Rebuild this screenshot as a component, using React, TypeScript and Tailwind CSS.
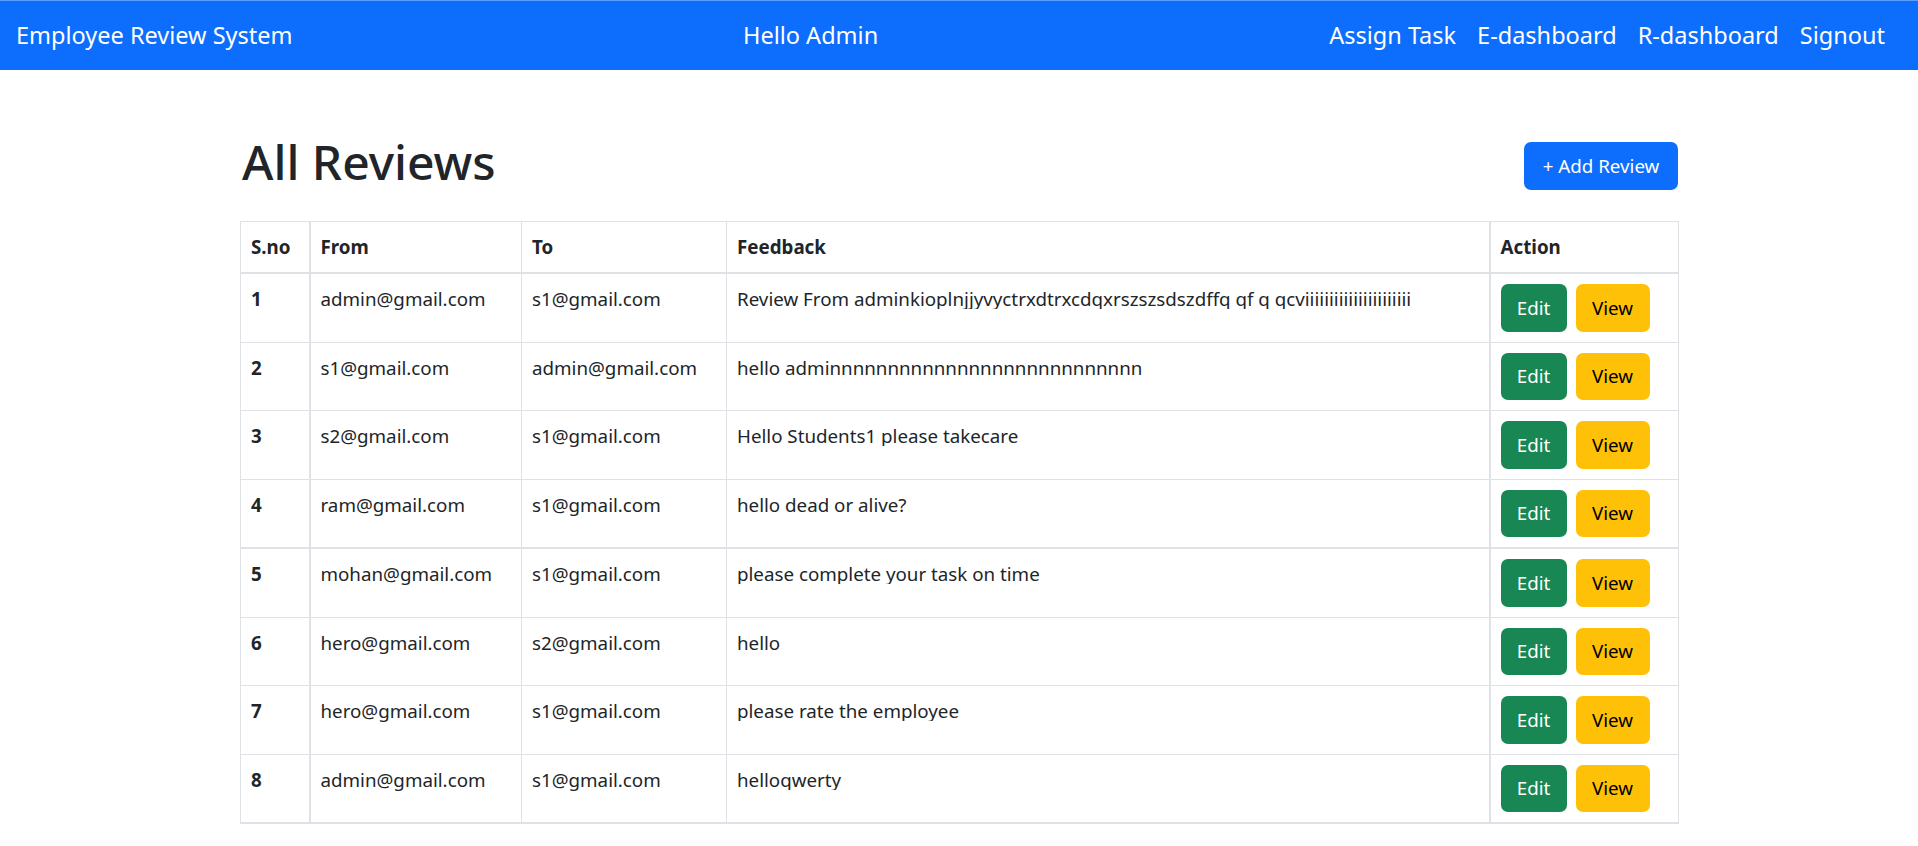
const reviews = [
  { from: 'admin@gmail.com', to: 's1@gmail.com', feedback: 'Review From adminkioplnjjyvyctrxdtrxcdqxrszszsdszdffq qf q qcviiiiiiiiiiiiiiiiiiiiii' },
  { from: 's1@gmail.com', to: 'admin@gmail.com', feedback: 'hello admi' + 'n'.repeat(27) },
  { from: 's2@gmail.com', to: 's1@gmail.com', feedback: 'Hello Students1 please takecare' },
  { from: 'ram@gmail.com', to: 's1@gmail.com', feedback: 'hello dead or alive?' },
  { from: 'mohan@gmail.com', to: 's1@gmail.com', feedback: 'please complete your task on time' },
  { from: 'hero@gmail.com', to: 's2@gmail.com', feedback: 'hello' },
  { from: 'hero@gmail.com', to: 's1@gmail.com', feedback: 'please rate the employee' },
  { from: 'admin@gmail.com', to: 's1@gmail.com', feedback: 'helloqwerty' },
];

function Navbar() {
  return (
    <nav className="h-[70px] bg-[#0d6efd] border-t border-[#5c9dfd] flex items-center px-4 text-white text-[23.5px]">
      <div className="w-[727px]">Employee Review System</div>
      <div>Hello Admin</div>
      <div className="ml-auto flex gap-[21px] pr-[17px]">
        <a>Assign Task</a>
        <a>E-dashboard</a>
        <a>R-dashboard</a>
        <a>Signout</a>
      </div>
    </nav>
  );
}

export default function App() {
  return (
    <div className="min-h-screen bg-white font-['Noto_Sans',sans-serif] text-[#212529]">
      <Navbar />
      <main className="w-[1438px] mx-auto">
        <div className="flex items-start justify-between pt-[62px] pb-[29px]">
          <h1 className="pl-[2px] text-[48px] leading-[60px] font-medium">All Reviews</h1>
          <button className="mt-[10px] h-[48px] w-[154px] rounded-[7px] bg-[#0d6efd] text-white text-[18.75px]">
            + Add Review
          </button>
        </div>
        <table className="w-full table-fixed border-collapse text-[18.75px] leading-[30px]">
          <colgroup>
            <col className="w-[69px]" />
            <col className="w-[212px]" />
            <col className="w-[205px]" />
            <col className="w-[763px]" />
            <col className="w-[189px]" />
          </colgroup>
          <thead>
            <tr className="border-t border-b-2 border-[#dee2e6] font-bold text-left">
              <th className="py-[10px] px-[10px] border-l border-r-2 border-[#dee2e6]">S.no</th>
              <th className="py-[10px] px-[10px] border-r border-[#dee2e6]">From</th>
              <th className="py-[10px] px-[10px] border-r border-[#dee2e6]">To</th>
              <th className="py-[10px] px-[10px] border-r-2 border-[#dee2e6]">Feedback</th>
              <th className="py-[10px] px-[10px] border-r border-[#dee2e6]">Action</th>
            </tr>
          </thead>
          <tbody>
            {reviews.map((r, i) => (
              <tr
                key={i}
                className={
                  i === 3 || i === 7
                    ? 'border-b-2 border-[#dee2e6] align-top'
                    : 'border-b border-[#dee2e6] align-top'
                }
              >
                <td className="py-[10px] px-[10px] font-bold border-l border-r-2 border-[#dee2e6]">{i + 1}</td>
                <td className="py-[10px] px-[10px] border-r border-[#dee2e6]">{r.from}</td>
                <td className="py-[10px] px-[10px] border-r border-[#dee2e6]">{r.to}</td>
                <td className="py-[10px] px-[10px] border-r-2 border-[#dee2e6]">
                  <div className="h-[25px] overflow-hidden whitespace-nowrap">{r.feedback}</div>
                </td>
                <td className="py-[10px] px-[10px] border-r border-[#dee2e6]">
                  <div className="flex gap-[9px]">
                    <button className="h-[47.5px] w-[66px] rounded-[7px] bg-[#198754] text-white">Edit</button>
                    <button className="h-[47.5px] w-[74px] rounded-[7px] bg-[#ffc107] text-black">View</button>
                  </div>
                </td>
              </tr>
            ))}
          </tbody>
        </table>
      </main>
    </div>
  );
}
